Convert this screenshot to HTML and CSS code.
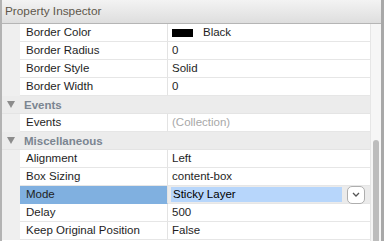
FILE: index.html
```html
<!DOCTYPE html>
<html lang="en">
<head>
    <meta charset="UTF-8">
    <title>Property Inspector</title>
    <link rel="stylesheet" href="styles.css">
</head>
<body>

    <div class="panel">
        <div class="title">Property Inspector</div>

        <div class="body">
            <div class="grid">
                <div class="row">
                    <div class="gutter"></div>
                    <div class="label">Border Color</div>
                    <div class="value"><span class="swatch"></span>Black</div>
                </div>
                <div class="row">
                    <div class="gutter"></div>
                    <div class="label">Border Radius</div>
                    <div class="value">0</div>
                </div>
                <div class="row">
                    <div class="gutter"></div>
                    <div class="label">Border Style</div>
                    <div class="value">Solid</div>
                </div>
                <div class="row">
                    <div class="gutter"></div>
                    <div class="label">Border Width</div>
                    <div class="value">0</div>
                </div>

                <div class="group">
                    <span class="arrow"></span>
                    Events
                </div>
                <div class="row">
                    <div class="gutter"></div>
                    <div class="label">Events</div>
                    <div class="value muted">(Collection)</div>
                </div>

                <div class="group">
                    <span class="arrow"></span>
                    Miscellaneous
                </div>
                <div class="row">
                    <div class="gutter"></div>
                    <div class="label">Alignment</div>
                    <div class="value">Left</div>
                </div>
                <div class="row">
                    <div class="gutter"></div>
                    <div class="label">Box Sizing</div>
                    <div class="value">content-box</div>
                </div>
                <div class="row selected">
                    <div class="gutter"></div>
                    <div class="label">Mode</div>
                    <div class="value editing">
                        <div class="field">Sticky Layer</div>
                        <div class="dropdown">
                            <svg width="8" height="5" viewBox="0 0 8 5">
                                <path d="M1 1 L4 4 L7 1" fill="none" stroke="#555" stroke-width="1.3"/>
                            </svg>
                        </div>
                    </div>
                </div>
                <div class="row">
                    <div class="gutter"></div>
                    <div class="label">Delay</div>
                    <div class="value">500</div>
                </div>
                <div class="row">
                    <div class="gutter"></div>
                    <div class="label">Keep Original Position</div>
                    <div class="value">False</div>
                </div>
            </div>

            <div class="scrollbar">
                <div class="thumb"></div>
            </div>
        </div>
    </div>

</body>
</html>
```

FILE: styles.css
```css
body {
    margin: 0;
    font-family: "Liberation Sans", Arial, sans-serif;
    font-size: 11.5px;
    color: #1e1e1e;
    background: #fff;
}
.panel {
    width: 384px;
    height: 241px;
    box-sizing: border-box;
    border-left: 2px solid #b3b3b3;
    border-right: 3px solid #a8a8a8;
    display: flex;
    flex-direction: column;
    overflow: hidden;
}
.title {
    height: 23px;
    flex-shrink: 0;
    border-bottom: 1px solid #b5b5b5;
    background: linear-gradient(#f3f3f3, #dedede);
    color: #5e574b;
    line-height: 23px;
    padding-left: 3px;
    font-size: 11.8px;
}
.body {
    flex: 1;
    display: flex;
    min-height: 0;
}
.grid {
    flex: 1;
    overflow: hidden;
}
.row {
    display: flex;
    height: 18px;
}
.gutter {
    width: 18px;
    background: #efefef;
    flex-shrink: 0;
}
.label {
    width: 141px;
    padding-left: 6px;
    line-height: 17px;
    border-right: 1px solid #e3e3e3;
    border-bottom: 1px solid #e6e6e6;
    white-space: nowrap;
    flex-shrink: 0;
}
.value {
    flex: 1;
    padding-left: 4px;
    line-height: 17px;
    border-bottom: 1px solid #e6e6e6;
    display: flex;
    align-items: center;
}
.muted {
    color: #a8a8a8;
}
.swatch {
    width: 21px;
    height: 8px;
    background: #000;
    margin-right: 10px;
}
.group {
    height: 18px;
    background: #ececec;
    color: #7b8591;
    font-weight: bold;
    line-height: 18px;
    display: flex;
    align-items: center;
    gap: 9px;
    padding-left: 5px;
    border-bottom: 1px solid #e4e4e4;
    box-sizing: border-box;
}
.arrow {
    width: 0;
    height: 0;
    border-left: 4px solid transparent;
    border-right: 4px solid transparent;
    border-top: 7px solid #8c8c8c;
}
.selected .label {
    background: #80b0e0;
    border-bottom-color: #80b0e0;
}
.editing {
    background: #ebebeb;
    padding-left: 3px;
    gap: 5px;
}
.field {
    flex: 1;
    height: 15px;
    line-height: 15px;
    background: #b7d6fb;
    padding-left: 2px;
    color: #000;
}
.dropdown {
    width: 18px;
    height: 18px;
    box-sizing: border-box;
    margin-right: 5px;
    background: #fff;
    border: 1px solid #aeaeae;
    border-radius: 5px;
    display: flex;
    align-items: center;
    justify-content: center;
}
.scrollbar {
    width: 11px;
    flex-shrink: 0;
    background: #f6f6f6;
    border-left: 1px solid #e6e6e6;
    box-sizing: border-box;
    position: relative;
}
.thumb {
    position: absolute;
    left: 2px;
    top: 116px;
    width: 6px;
    height: 120px;
    border-radius: 3px;
    background: #bdbdbd;
}
```
